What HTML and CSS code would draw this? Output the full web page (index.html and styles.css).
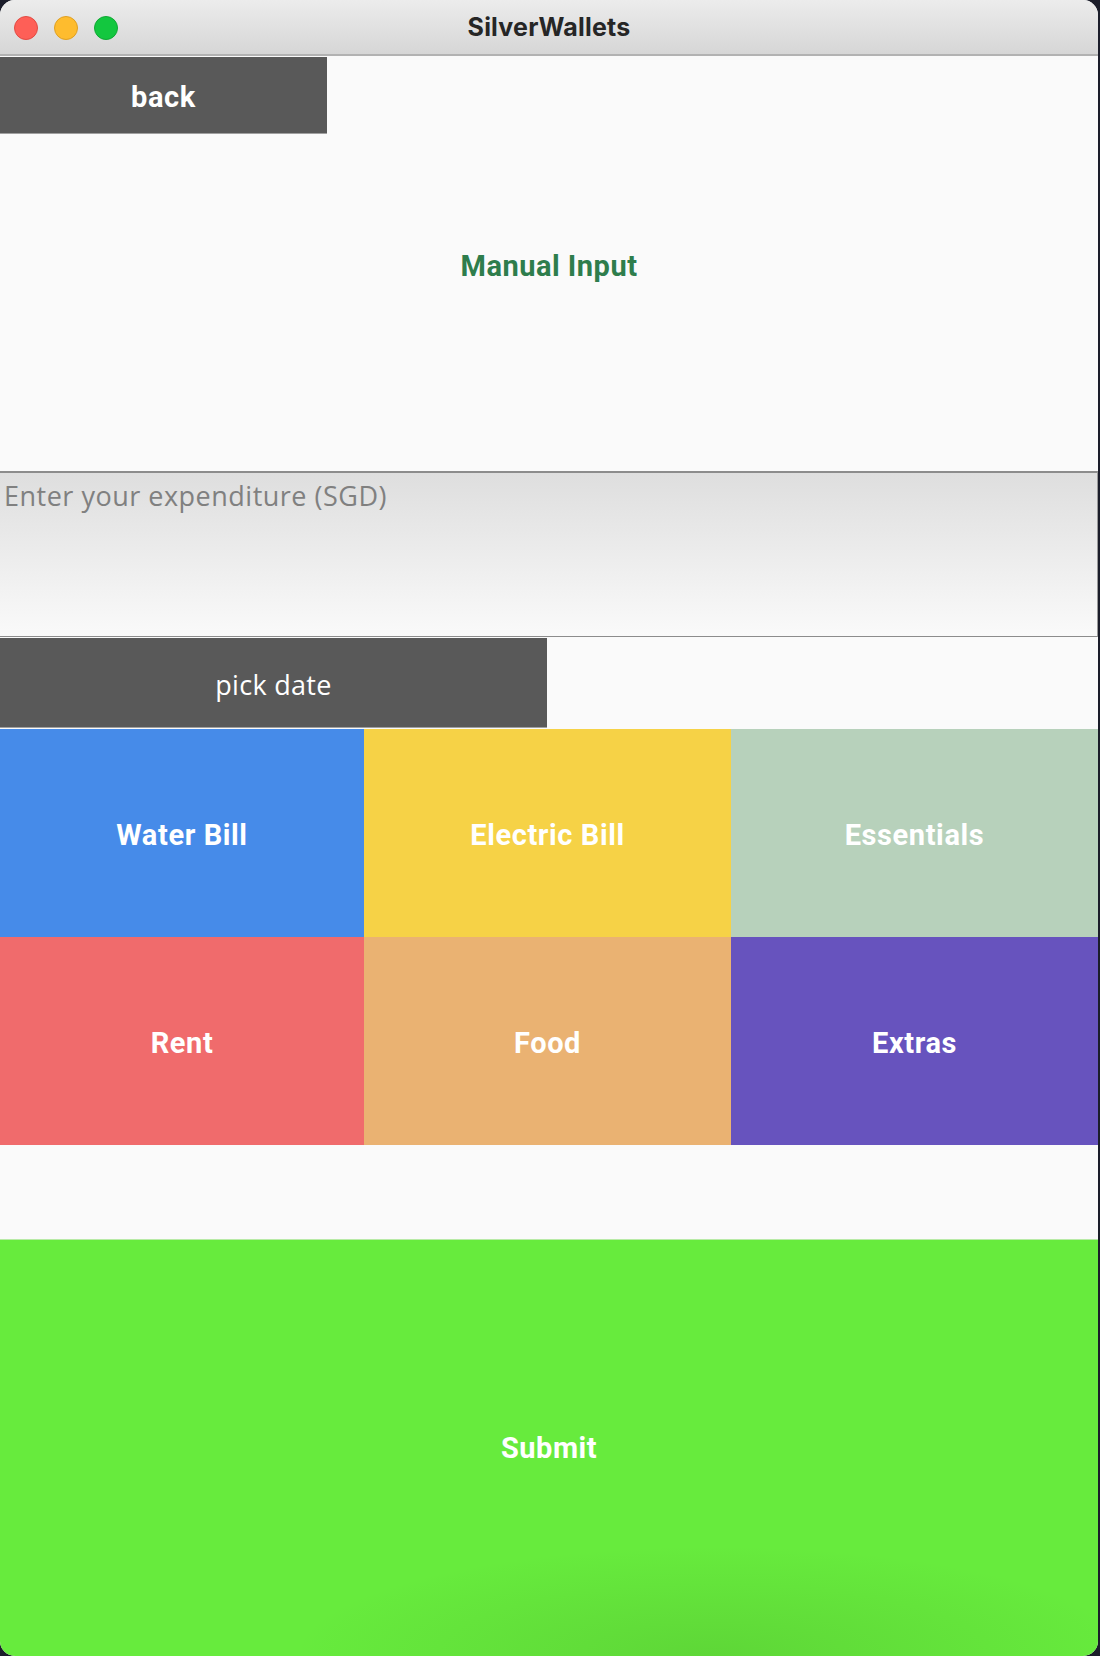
FILE: index.html
```html
<!DOCTYPE html>
<html>
<head>
<meta charset="utf-8">
<title>SilverWallets</title>
<link rel="stylesheet" href="styles.css">
</head>
<body>
<div class="window">
  <div class="titlebar">
    <div class="lights">
      <span class="light red"></span>
      <span class="light yellow"></span>
      <span class="light green"></span>
    </div>
    <div class="title">SilverWallets</div>
  </div>
  <div class="header">
    <div class="back">back</div>
    <div class="heading">Manual Input</div>
  </div>
  <div class="field">Enter your expenditure (SGD)</div>
  <div class="daterow">
    <div class="pickdate">pick date</div>
  </div>
  <div class="grid">
    <div class="cell water">Water Bill</div>
    <div class="cell electric">Electric Bill</div>
    <div class="cell essentials">Essentials</div>
    <div class="cell rent">Rent</div>
    <div class="cell food">Food</div>
    <div class="cell extras">Extras</div>
  </div>
  <div class="spacer"></div>
  <div class="submit">Submit</div>
</div>
</body>
</html>
```

FILE: styles.css
```css
html, body {
  margin: 0;
  padding: 0;
}
body {
  background: #1b1d2a;
  width: 1100px;
  height: 1656px;
  overflow: hidden;
}
.window {
  width: 1098px;
  height: 1656px;
  background: #fafafa;
  border-radius: 15px;
  overflow: hidden;
  display: flex;
  flex-direction: column;
  font-family: Roboto, "Noto Sans", sans-serif;
}
.titlebar {
  height: 54px;
  flex: none;
  background: linear-gradient(#ececec, #d6d6d6);
  border-bottom: 2px solid #b2b2b2;
  display: grid;
  align-items: center;
}
.lights {
  grid-area: 1 / 1;
  display: flex;
  gap: 16px;
  padding-left: 14px;
  padding-top: 2px;
  align-self: center;
}
.light {
  width: 24px;
  height: 24px;
  border-radius: 50%;
  box-sizing: border-box;
}
.red { background: #fe5f57; border: 1px solid #e24b43; }
.yellow { background: #febc2e; border: 1px solid #dfa023; }
.green { background: #13c73f; border: 1px solid #10a834; }
.title {
  grid-area: 1 / 1;
  justify-self: center;
  font-family: Inter, "Liberation Sans", sans-serif;
  font-weight: 700;
  font-size: 25px;
  color: #262626;
  letter-spacing: 0.2px;
  padding-bottom: 1px;
}
.header {
  height: 415px;
  flex: none;
  display: grid;
}
.back {
  grid-area: 1 / 1;
  align-self: start;
  justify-self: start;
  margin-top: 1px;
  width: 327px;
  height: 77px;
  padding-top: 4px;
  box-sizing: border-box;
  background: #595959;
  border-bottom: 1px solid #a0a0a0;
  color: #fff;
  font-weight: 700;
  font-size: 29px;
  letter-spacing: 0.6px;
  display: flex;
  align-items: center;
  justify-content: center;
}
.heading {
  grid-area: 1 / 1;
  align-self: center;
  justify-self: center;
  color: #2e7d4c;
  font-weight: 700;
  font-size: 29px;
  letter-spacing: 0.5px;
  padding-top: 4px;
}
.field {
  flex: none;
  border-top: 2px solid #8c8c8c;
  border-bottom: 1px solid #8c8c8c;
  border-right: 1px solid #9a9a9a;
  background: linear-gradient(#dedede, #fafafa);
  color: #808080;
  font-family: "Open Sans", Roboto, sans-serif;
  font-size: 27px;
  letter-spacing: 0.5px;
  padding: 4px 0 0 4px;
  box-sizing: border-box;
  height: 166px;
}
.daterow {
  height: 92px;
  flex: none;
  padding-top: 1px;
  box-sizing: border-box;
}
.pickdate {
  width: 547px;
  height: 90px;
  padding-top: 4px;
  background: #595959;
  border-bottom: 1px solid #a0a0a0;
  box-sizing: border-box;
  color: #fff;
  font-family: "Open Sans", Roboto, sans-serif;
  font-size: 27px;
  letter-spacing: 0.3px;
  display: flex;
  align-items: center;
  justify-content: center;
}
.grid {
  flex: none;
  display: grid;
  grid-template-columns: 364px 367px 1fr;
  grid-template-rows: 208px 208px;
}
.cell {
  display: flex;
  align-items: center;
  justify-content: center;
  padding-top: 3px;
  color: #fff;
  font-weight: 700;
  font-size: 29px;
  letter-spacing: 0.6px;
}
.water { background: #468be9; }
.electric { background: #f6d246; }
.essentials { background: #b7d1bb; }
.rent { background: #f06b6c; }
.food { background: #eab272; }
.extras { background: #6753be; }
.spacer {
  height: 94px;
  flex: none;
}
.submit {
  flex: 1;
  background:
    radial-gradient(ellipse 420px 110px at 65% 100%, rgba(40, 90, 20, 0.14), rgba(40, 90, 20, 0) 100%),
    #67eb3d;
  border-top: 1px solid #b8eaa6;
  color: #fff;
  font-weight: 700;
  font-size: 29px;
  letter-spacing: 0.5px;
  display: flex;
  align-items: center;
  justify-content: center;
}
```
